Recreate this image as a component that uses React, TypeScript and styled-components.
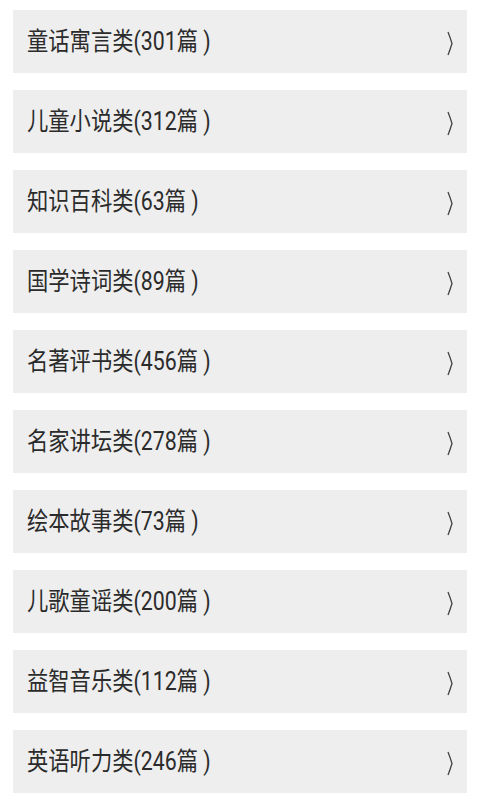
import * as React from 'react';
import styled, { createGlobalStyle } from 'styled-components';

const GlobalStyle = createGlobalStyle`
    html, body {
        margin: 0;
        padding: 0;
        background: #FFFFFF;
    }
    body {
        font-family: Roboto, 'Noto Sans CJK SC', sans-serif;
    }
`;

const CategoryList = styled.div`
    display: flex;
    flex-direction: column;
    gap: 17px;
    padding: 10px 13px 0 13px;
`;

const CategoryRow = styled.div`
    display: flex;
    align-items: center;
    justify-content: space-between;
    height: 63px;
    background: #EEEEEE;
    padding: 0 14px 0 14px;
    box-sizing: border-box;
`;

// the source glyphs are narrower than ours, so squeeze them a bit
const CategoryName = styled.span`
    display: inline-block;
    font-size: 25px;
    line-height: 30px;
    color: #2b2b2b;
    white-space: nowrap;
    transform: scaleX(0.852);
    transform-origin: left center;
`;

const Chevron = styled.svg`
    width: 6px;
    height: 25px;
    margin-top: 3px;
    flex-shrink: 0;
`;

const categories = [
    { name: '童话寓言类', count: 301 },
    { name: '儿童小说类', count: 312 },
    { name: '知识百科类', count: 63 },
    { name: '国学诗词类', count: 89 },
    { name: '名著评书类', count: 456 },
    { name: '名家讲坛类', count: 278 },
    { name: '绘本故事类', count: 73 },
    { name: '儿歌童谣类', count: 200 },
    { name: '益智音乐类', count: 112 },
    { name: '英语听力类', count: 246 }
];

export default function App() {
    return (
        <>
            <GlobalStyle />
            <CategoryList>
                {categories.map((c) => (
                    <CategoryRow key={c.name}>
                        <CategoryName>{c.name}({c.count}篇 )</CategoryName>
                        <Chevron viewBox="0 0 6 25">
                            <path
                                d="M1 1 Q3 6 5 12.5 Q3 19 1 24"
                                fill="none"
                                stroke="#444444"
                                strokeWidth="1.3"
                            />
                        </Chevron>
                    </CategoryRow>
                ))}
            </CategoryList>
        </>
    );
}
